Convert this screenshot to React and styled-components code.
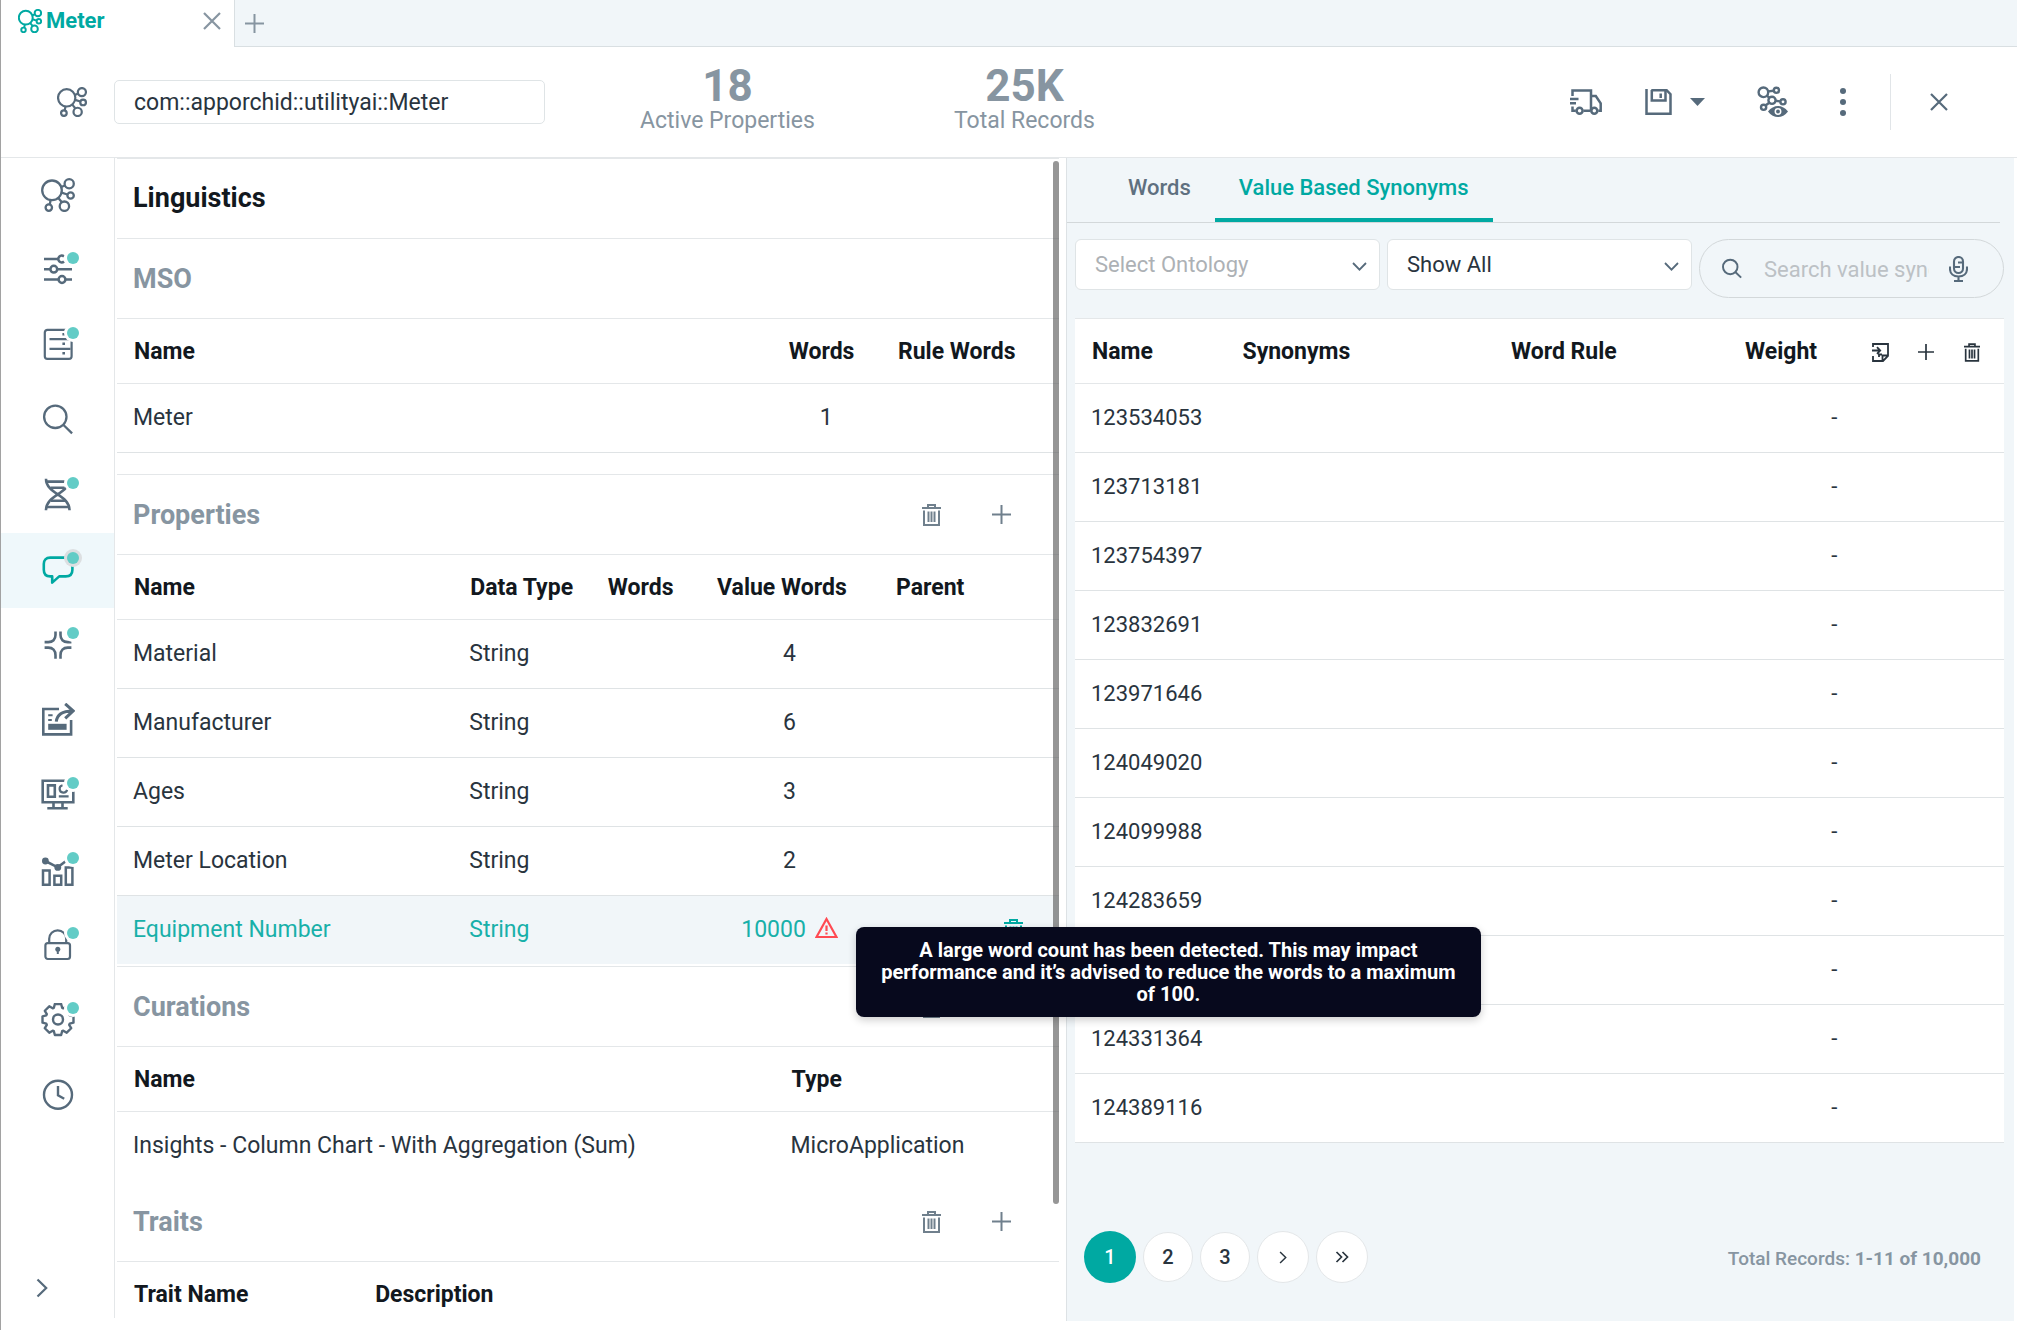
import React, { useState } from 'react'
import styled, { createGlobalStyle, css } from 'styled-components';


const GlobalStyle = createGlobalStyle`
  * {
    box-sizing: border-box;
  }

  body {
    margin: 0;
    background: #fff;
    color: #29343e;
    font-family: Roboto, "Liberation Sans", sans-serif;
    font-size: 22px;
    line-height: 26px;
  }

  button, input, select {
    font: inherit;
    color: inherit;
  }

  svg {
    display: block;
    flex: none;
  }
`;

const slate = '#566a7b';
const muted = '#8795a1';
const teal = '#00a9a2';
const line = '#e4e7e9';
const pale = '#f1f6f9';

const Shell = styled.div`
  display: flex;
  flex-direction: column;
  height: 100vh;
  padding-right: 3px;
  border-left: 1px solid #a2a2a2;
`;

/* tab strip */

const TabStrip = styled.div`
  display: flex;
  height: 47px;
  background: ${pale};
`;

const FileTab = styled.div`
  display: flex;
  align-items: center;
  width: 234px;
  padding: 0 13px 5px 17px;
  gap: 4px;
  background: #fff;
  border-right: 1px solid #d9dfe2;
  color: ${teal};
  font-weight: 700;
`;

const TabLabel = styled.span`
  flex: 1;
`;

const StripRest = styled.div`
  flex: 1;
  display: flex;
  align-items: center;
  padding-left: 10px;
  border-bottom: 1px solid #d9dfe2;
`;

const IconButton = styled.button`
  display: flex;
  align-items: center;
  justify-content: center;
  flex: none;
  min-width: ${({ $width }) => ($width ? `${$width}px` : '0')};
  margin: 0 0 0 ${({ $before }) => $before || 0}px;
  padding: 0;
  border: none;
  background: none;
  color: ${({ $color }) => $color || slate};
  cursor: pointer;
`;

/* header */

const Header = styled.header`
  display: flex;
  align-items: center;
  height: 111px;
  padding: 0 69px 0 56px;
  border-bottom: 1px solid ${line};
  color: ${slate};
  font-size: 23px;
`;

const NameInput = styled.input`
  width: 431px;
  height: 44px;
  margin: 0 95px 0 27px;
  padding: 0 19px;
  border: 1px solid #dfe4e6;
  border-radius: 5px;
  outline: none;
  color: #29343e;
`;

const Stat = styled.div`
  display: flex;
  flex-direction: column;
  align-items: center;
  margin-right: 139px;
  padding-bottom: 6px;
  color: ${muted};
`;

const StatValue = styled.strong`
  font-size: 44px;
  line-height: 44px;
  font-weight: 700;
`;

const Tools = styled.div`
  display: flex;
  align-items: center;
  margin-left: auto;
`;

const Divider = styled.span`
  width: 1px;
  height: 56px;
  margin-left: 44px;
  background: #e1e5e8;
`;

/* body */

const Body = styled.main`
  flex: 1;
  min-height: 0;
  display: grid;
  grid-template-columns: 114px minmax(0, 1fr) minmax(0, 1fr);
  grid-template-rows: minmax(0, 1fr);
`;

const Rail = styled.nav`
  display: flex;
  flex-direction: column;
  margin-bottom: 12px;
  border-right: 1px solid ${line};
`;

const RailItem = styled.button`
  position: relative;
  display: flex;
  align-items: center;
  justify-content: center;
  flex: none;
  height: 75px;
  padding: 0 0 2px;
  border: none;
  background: ${({ $active }) => ($active ? '#eff8fb' : 'none')};
  color: ${({ $active }) => ($active ? teal : slate)};
  cursor: pointer;
`;

const Dot = styled.span`
  position: absolute;
  top: 19px;
  left: 66px;
  width: 12px;
  height: 12px;
  border-radius: 50%;
  background: #62ccc6;
  box-shadow: 0 0 0 3px ${({ $active }) => ($active ? '#dcdfe1' : '#fff')};
`;

const RailToggle = styled(IconButton)`
  align-self: flex-start;
  margin: auto 0 20px 35px;
`;

const LeftPanel = styled.section`
  position: relative;
  margin: 0 7px 12px 2px;
  border-top: 1px solid ${line};
  overflow-x: visible;
  overflow-y: clip;
`;

const ScrollThumb = styled.div`
  position: absolute;
  top: 2px;
  right: 0;
  width: 6px;
  height: 1043px;
  border-radius: 3px;
  background: rgba(90, 90, 90, 0.64);
`;

const PanelTitle = styled.h1`
  height: 80px;
  margin: 0;
  padding: 0 16px;
  border-bottom: 1px solid ${line};
  color: #12181e;
  font-size: 27px;
  line-height: 79px;
  font-weight: 700;
`;

const Section = styled.section`
  margin-top: ${({ $gap }) => $gap || 0}px;
  border-top: ${({ $topLine }) => ($topLine ? `1px solid ${line}` : 'none')};
`;

const SectionHead = styled.div`
  display: flex;
  align-items: center;
  gap: 30px;
  height: 80px;
  padding: 0 38px 0 16px;
  border-bottom: 1px solid ${line};
`;

const SectionTitle = styled.h2`
  flex: 1;
  margin: 0;
  color: ${muted};
  font-size: 27px;
  font-weight: 700;
`;

const Table = styled.table`
  width: 100%;
  table-layout: fixed;
  border-spacing: 0;
  font-size: ${({ $size }) => $size || 23}px;
`;

const Th = styled.th`
  width: ${({ $width }) => $width || 'auto'};
  height: 65px;
  padding: 2px 0 0 ${({ $flush }) => ($flush ? 4 : 17)}px;
  border-bottom: 1px solid ${line};
  color: #12181e;
  font-size: 23px;
  font-weight: 700;
  text-align: left;
  white-space: nowrap;
`;

const Td = styled.td`
  height: ${({ $short }) => ($short ? 68 : 69)}px;
  padding: 0 16px;
  border-bottom: ${({ $noLine }) => ($noLine ? 'none' : '1px solid #dfe3e5')};
  text-align: ${({ $align }) => $align || 'left'};
  white-space: nowrap;

  ${({ $selected }) => $selected && css`
    background: ${pale};
    color: #18b0a9;
  `}
`;

const WarnCount = styled.span`
  display: inline-flex;
  align-items: flex-start;
  gap: 9px;
`;

const WarnAnchor = styled.span`
  position: relative;
  color: #ff4a52;
`;

const Tooltip = styled.span`
  position: absolute;
  z-index: 5;
  top: 10px;
  left: calc(100% + 18px);
  width: 625px;
  padding: 12px 24px;
  border-radius: 8px;
  background: #07091d;
  box-shadow: 0 3px 8px rgba(0, 0, 0, 0.2);
  color: #fff;
  font-size: 20px;
  line-height: 22px;
  font-weight: 700;
  text-align: center;
  white-space: normal;
`;

/* right panel */

const RightPanel = styled.section`
  display: flex;
  flex-direction: column;
  margin: 0 3px 9px 0;
  padding: 0 10px 0 8px;
  border-left: 1px solid #dde2e5;
  background: ${pale};
`;

const Tabs = styled.div`
  display: flex;
  flex: none;
  height: 65px;
  margin: 0 4px 0 -8px;
  padding-left: 37px;
  border-bottom: 1px solid #d3d8da;
`;

const Tab = styled.button`
  height: 64px;
  padding: 0 24px;
  border: none;
  border-bottom: 4px solid ${({ $active }) => ($active ? teal : 'transparent')};
  background: none;
  color: ${({ $active }) => ($active ? teal : '#5f7080')};
  font-weight: 500;
  cursor: pointer;
`;

const Filters = styled.div`
  display: grid;
  grid-template-columns: repeat(3, minmax(0, 1fr));
  align-items: start;
  gap: 7px;
  margin: 16px 0 20px;
`;

const SelectWrap = styled.div`
  position: relative;
`;

const SelectBox = styled.select`
  width: 100%;
  height: 51px;
  padding: 0 48px 0 19px;
  appearance: none;
  border: 1px solid #dfe4e6;
  border-radius: 6px;
  outline: none;
  background: #fff;
  color: ${({ $empty }) => ($empty ? '#adb1b5' : '#29343e')};
`;

const SelectArrow = styled.span`
  position: absolute;
  top: 23px;
  right: 13px;
  color: ${slate};
  pointer-events: none;
`;

const SearchBox = styled.div`
  display: flex;
  align-items: center;
  height: 59px;
  padding: 0 35px 0 21px;
  border: 1px solid #d3d8da;
  border-radius: 30px;
  color: ${slate};
`;

const SearchInput = styled.input`
  flex: 1;
  min-width: 0;
  margin: 0 20px 0 21px;
  padding: 2px 0 0;
  border: none;
  outline: none;
  background: none;

  &::placeholder {
    color: #bcc1c5;
  }
`;

const SynonymTable = styled(Table)`
  border-top: 1px solid ${line};
  background: #fff;
`;

const HeadActions = styled.div`
  display: flex;
`;

const Pager = styled.footer`
  display: flex;
  align-items: center;
  gap: 7px;
  margin-top: auto;
  padding: 0 23px 38px 9px;
`;

const PageButton = styled.button`
  display: flex;
  align-items: center;
  justify-content: center;
  width: ${({ $size }) => $size || 50}px;
  height: ${({ $size }) => $size || 50}px;
  padding: 0;
  border: ${({ $current }) => ($current ? 'none' : `1px solid ${line}`)};
  border-radius: 50%;
  background: ${({ $current }) => ($current ? teal : '#fff')};
  color: ${({ $current }) => ($current ? '#fff' : '#29343e')};
  font-size: 20px;
  font-weight: 500;
  cursor: pointer;
`;

const RecordCount = styled.span`
  margin-left: auto;
  padding-top: 4px;
  color: ${muted};
  font-size: 19px;
  font-weight: 500;

  strong {
    font-weight: 700;
  }
`;

/* icons */

const Svg = ({ w = 34, h = w, box = `0 0 ${w} ${h}`, sw = 2.2, children }) => (
  <svg width={w} height={h} viewBox={box} fill="none" stroke="currentColor" strokeWidth={sw} aria-hidden="true">
    {children}
  </svg>
)

const OrchidIcon = ({ size = 34, sw = 2.3 }) => (
  <Svg w={size} box="0 0 34 34" sw={sw}>
    <circle cx="11" cy="12.3" r="9.8" />
    <circle cx="28.2" cy="5.8" r="4.6" />
    <circle cx="29.6" cy="17.5" r="3.2" />
    <circle cx="23.4" cy="28.2" r="4.7" />
    <circle cx="7.8" cy="29.6" r="3.2" />
    <path d="M20.2 9l3.7-1.5M20.6 14.6l5.8 1.9M17.3 20l3.4 4M9.6 22l-.8 4.4" />
  </Svg>
)

const SlidersIcon = () => (
  <Svg sw={2.5}>
    <path d="M3 6h14M3 16.2h6.5M16.5 16.2H31M3 26.5h14.5M25 26.5h6" />
    <path d="M23 3.5a3.4 3.4 0 1 0 0 5" />
    <circle cx="12.8" cy="16.2" r="3.4" />
    <circle cx="21" cy="26.5" r="3.4" />
  </Svg>
)

const ServerIcon = () => (
  <Svg>
    <rect x="3.8" y="1.8" width="26.8" height="29" rx="2.6" />
    <path d="M8.5 11.2h21M8.5 20.8h21" />
    <path d="M21.4 6.3h2.6M21.4 15.8h2.6M21.4 25.2h2.6" strokeWidth="2.6" />
  </Svg>
)

const SearchIcon = ({ size = 34 }) => (
  <Svg w={size} box="0 0 34 34" sw={size < 30 ? 3 : 2.3}>
    <circle cx="14.3" cy="13.8" r="11.2" />
    <path d="M22.5 22l8.6 8.4" />
  </Svg>
)

const DnaIcon = () => (
  <Svg>
    <path d="M5 .7c0 15.5 23.5 16 23.5 31.6M28.5.7C28.5 16.2 5 16.7 5 32.3" strokeWidth="2.6" />
    <path d="M6 3.6h21M9.5 9.8h14M10 22.7h14M6 29h22" strokeWidth="2.6" />
  </Svg>
)

const ChatIcon = () => (
  <Svg sw={2.6}>
    <path d="M9.2 4.6h15.6c4.2 0 6.6 2.4 6.6 6.4v5.8c0 4.2-2.4 6.6-6.6 6.6h-6.6l-7 6.2v-6.2H9.2c-4.2 0-6.4-2.4-6.4-6.6V11c0-4 2.2-6.4 6.4-6.4z" strokeLinejoin="round" />
  </Svg>
)

const ConvergeIcon = () => (
  <Svg sw={2.6}>
    <path d="M14.5 3.5v3.6c0 4.4-2.8 7-7.2 7H3.6M19.5 3.5v3.6c0 4.4 2.8 7 7.2 7h3.7M14.5 30.8v-3.6c0-4.6-2.8-7.6-7.2-7.6H3.6M19.5 30.8v-3.6c0-4.6 2.8-7.6 7.2-7.6h3.7" />
  </Svg>
)

const ShareIcon = () => (
  <Svg sw={2.6}>
    <path d="M18 6H2.3v25.4h27.8V17" />
    <path d="M15.3 18.6c.6-7 6-10.7 16.5-10.7M24.2.8l8 7.1-8 7.5" strokeWidth="3" />
    <path d="M7.2 12.2h4.4M7.2 17h3.6" strokeWidth="2" />
    <rect x="7.2" y="20.8" width="18.4" height="6" fill="currentColor" stroke="none" />
  </Svg>
)

const MonitorIcon = () => (
  <Svg sw={2.6}>
    <path d="M1.7 2.8h30.6v21.5H1.7z" />
    <path d="M7 7.4h6.8v11.4H7z" />
    <path d="M21.5 7.2a3.8 3.8 0 1 0 4.6 4.6M17.8 18.4h9.8" strokeWidth="2.2" />
    <path d="M12.5 24.5v5M21.5 24.5v5M6.3 30.2h20.4" />
  </Svg>
)

const ChartIcon = () => (
  <Svg>
    <path d="M2 17.6h6.6v14.2H2zM13.4 22.8h6.8v9h-6.8zM24.8 14.4h6.6v17.4h-6.6z" strokeWidth="2.5" />
    <path d="M4.3 8l12.4 6.3L27 6.5" strokeWidth="2.6" />
    <circle cx="4.4" cy="8" r="3.4" fill="currentColor" stroke="none" />
    <circle cx="16.8" cy="14.4" r="3.4" fill="currentColor" stroke="none" />
  </Svg>
)

const LockIcon = () => (
  <Svg>
    <rect x="4.4" y="15.2" width="24.6" height="15.8" rx="2.4" />
    <path d="M8.2 15v-4.2a8.5 8.5 0 0 1 17 0V15" />
    <circle cx="16.8" cy="21.2" r="2.5" fill="currentColor" stroke="none" />
    <path d="M16.8 21v5" strokeWidth="2" />
  </Svg>
)

// eight rounded teeth around the centre of the icon
const gearPoints = () => {
  const points = []
  for (let i = 0; i < 8; i++) {
    [[-0.34, 12.4], [-0.2, 15.8], [0.2, 15.8], [0.34, 12.4]].forEach(([turn, radius]) => {
      const angle = (i * Math.PI) / 4 + turn
      points.push(`${(17 + radius * Math.sin(angle)).toFixed(2)},${(16.5 - radius * Math.cos(angle)).toFixed(2)}`)
    })
  }
  return points.join(' ')
}

const GearIcon = () => (
  <Svg sw={2.4}>
    <polygon points={gearPoints()} strokeLinejoin="round" />
    <circle cx="17" cy="16.5" r="5" />
  </Svg>
)

const ClockIcon = () => (
  <Svg sw={2.4}>
    <circle cx="17" cy="16.8" r="14" />
    <path d="M17 8v9.2l6.2 3.6" />
  </Svg>
)

const TruckIcon = () => (
  <Svg w={32} h={26} sw={2.5}>
    <path d="M2.5 7V1.5H21v20.2M21 7h4.8l4.9 7.4v7.3h-2.4M20.5 21.7h-7M5.8 21.7H2.5v-4.2" />
    <path d="M0 10h8.5M0 14.2h6" />
    <circle cx="9.6" cy="21.7" r="3" />
    <circle cx="24.3" cy="21.7" r="3" />
  </Svg>
)

const SaveIcon = () => (
  <Svg w={27} h={26} sw={2.5}>
    <path d="M1.5 0v24.7h24V5.2L21.6 1.2H6.3" />
    <path d="M6.8 1v10.4h13.7V1M15.7 4.5v4.6" />
  </Svg>
)

const CaretIcon = () => (
  <Svg w={15} h={8}>
    <path d="M0 0h15L7.5 8z" fill="currentColor" stroke="none" />
  </Svg>
)

const OrchidEyeIcon = () => (
  <Svg w={31} h={32} sw={2.4}>
    <circle cx="6.4" cy="6.3" r="4.8" />
    <circle cx="19.4" cy="4.3" r="2.6" />
    <circle cx="15" cy="14.3" r="3.6" />
    <circle cx="26" cy="15.8" r="2.6" />
    <circle cx="6.6" cy="21.3" r="2.6" />
    <path d="M11.3 5.4l5.4-.7M9.8 9.8l2.8 2M18.5 14.8l5 .6M12.2 16.7l-3.7 2.8" />
    <path d="M11 25.5c5.6-7.4 14.4-7.4 20 0-5.6 7.4-14.4 7.4-20 0z" fill="currentColor" stroke="none" />
    <circle cx="21" cy="25.5" r="2.7" stroke="#fff" strokeWidth="1.5" />
  </Svg>
)

const MoreIcon = () => (
  <Svg w={6} h={28}>
    <g fill="currentColor" stroke="none">
      <circle cx="3" cy="3" r="3" />
      <circle cx="3" cy="14" r="3" />
      <circle cx="3" cy="25" r="3" />
    </g>
  </Svg>
)

const CloseIcon = ({ sw = 2.2 }) => (
  <Svg w={18} sw={sw}>
    <path d="M1 1l16 16M17 1L1 17" />
  </Svg>
)

const PlusIcon = ({ size = 19 }) => (
  <Svg w={size} box="0 0 19 19" sw={2}>
    <path d="M9.5 0v19M0 9.5h19" />
  </Svg>
)

const TrashIcon = ({ w = 19, h = 22 }) => (
  <Svg w={w} h={h} box="0 0 19 22" sw={2}>
    <path d="M0 4h19M6 4V1h7v3M2 6.5V21h15V6.5M6.5 7.5V18M9.5 7.5V18M12.5 7.5V18" />
  </Svg>
)

const ImportIcon = () => (
  <Svg w={17} h={19} sw={1.8}>
    <path d="M1 4V1h15v12l-5 5H1v-5M0 7.5h8M5 4.2l3.2 3.3L5 10.8M10.5 18v-5.5H16M7 14v-2.5h3" />
  </Svg>
)

const WarnIcon = () => (
  <Svg w={23} h={21} sw={2.2}>
    <path d="M11.5 2L21.5 20h-20z" />
    <path d="M11.5 8.5v5.5M11.5 15.5v2" />
  </Svg>
)

const ChevronDown = () => (
  <Svg w={15} h={9} sw={1.8}>
    <path d="M1 1l6.5 6.7L14 1" />
  </Svg>
)

const ChevronRight = ({ w = 12, h = 20 }) => (
  <Svg w={w} h={h} box="0 0 12 20" sw={2.2}>
    <path d="M1.5 1.5l8.7 8.5-8.7 8.5" />
  </Svg>
)

const DoubleChevron = () => (
  <Svg w={15} h={12} sw={1.7}>
    <path d="M1.5 1l5 5-5 5M7.5 1l5 5-5 5" />
  </Svg>
)

const MicIcon = () => (
  <Svg w={19} h={26} sw={2.1}>
    <rect x="5" y="1" width="9" height="16" rx="4.5" />
    <path d="M1 10.5V13c0 4.7 3.5 7.5 8.5 7.5S18 17.7 18 13v-2.5M9.5 20.5V25M5 25h9M9 6.5h5M5 11h6" />
  </Svg>
)

/* data */

const railItems = [
  { label: 'Ontology', icon: <OrchidIcon /> },
  { label: 'Attributes', icon: <SlidersIcon />, dot: true },
  { label: 'Data sources', icon: <ServerIcon />, dot: true },
  { label: 'Search', icon: <SearchIcon /> },
  { label: 'Derivations', icon: <DnaIcon />, dot: true },
  { label: 'Linguistics', icon: <ChatIcon />, dot: true },
  { label: 'Actions', icon: <ConvergeIcon />, dot: true },
  { label: 'Share', icon: <ShareIcon /> },
  { label: 'Views', icon: <MonitorIcon />, dot: true },
  { label: 'Insights', icon: <ChartIcon />, dot: true },
  { label: 'Security', icon: <LockIcon />, dot: true },
  { label: 'Settings', icon: <GearIcon />, dot: true },
  { label: 'History', icon: <ClockIcon /> },
]

const properties = [
  { name: 'Material', type: 'String', words: 4 },
  { name: 'Manufacturer', type: 'String', words: 6 },
  { name: 'Ages', type: 'String', words: 3 },
  { name: 'Meter Location', type: 'String', words: 2 },
]

const synonyms = [
  '123534053', '123713181', '123754397', '123832691', '123971646', '124049020',
  '124099988', '124283659', '124297760', '124331364', '124389116',
]

const SectionActions = ({ name }) => (
  <>
    <IconButton $width={40} $color="#70808d" aria-label={`Delete ${name}`}><TrashIcon /></IconButton>
    <IconButton $width={40} $color="#70808d" aria-label={`Add ${name}`}><PlusIcon /></IconButton>
  </>
)

const Linguistics = () => (
  <LeftPanel>
    <PanelTitle>Linguistics</PanelTitle>

    <Section>
      <SectionHead>
        <SectionTitle>MSO</SectionTitle>
      </SectionHead>
      <Table>
        <thead>
          <tr>
            <Th $width="69.5%">Name</Th>
            <Th $width="11.6%">Words</Th>
            <Th>Rule Words</Th>
          </tr>
        </thead>
        <tbody>
          <tr>
            <Td>Meter</Td>
            <Td $align="center">1</Td>
            <Td />
          </tr>
        </tbody>
      </Table>
    </Section>

    <Section $gap={21} $topLine>
      <SectionHead>
        <SectionTitle>Properties</SectionTitle>
        <SectionActions name="property" />
      </SectionHead>
      <Table>
        <thead>
          <tr>
            <Th $width="35.7%">Name</Th>
            <Th $width="14.6%">Data Type</Th>
            <Th $width="11.6%">Words</Th>
            <Th $width="19%">Value Words</Th>
            <Th $width="9.4%">Parent</Th>
            <Th />
          </tr>
        </thead>
        <tbody>
          {properties.map(item => (
            <tr key={item.name}>
              <Td>{item.name}</Td>
              <Td>{item.type}</Td>
              <Td />
              <Td $align="center">{item.words}</Td>
              <Td />
              <Td />
            </tr>
          ))}
          <tr>
            <Td $selected $short $noLine>Equipment Number</Td>
            <Td $selected $short $noLine>String</Td>
            <Td $selected $short $noLine />
            <Td $selected $short $noLine $align="center">
              <WarnCount>
                10000
                <WarnAnchor>
                  <WarnIcon />
                  <Tooltip role="tooltip">
                    A large word count has been detected. This may impact performance and it’s advised to reduce the words to a maximum of 100.
                  </Tooltip>
                </WarnAnchor>
              </WarnCount>
            </Td>
            <Td $selected $short $noLine />
            <Td $selected $short $noLine>
              <IconButton $width={60} $color={teal} aria-label="Delete Equipment Number"><TrashIcon /></IconButton>
            </Td>
          </tr>
        </tbody>
      </Table>
    </Section>

    <Section $gap={2} $topLine>
      <SectionHead>
        <SectionTitle>Curations</SectionTitle>
        <SectionActions name="curation" />
      </SectionHead>
      <Table>
        <thead>
          <tr>
            <Th $width="69.8%">Name</Th>
            <Th>Type</Th>
          </tr>
        </thead>
        <tbody>
          <tr>
            <Td $short $noLine>Insights - Column Chart - With Aggregation (Sum)</Td>
            <Td $short $noLine>MicroApplication</Td>
          </tr>
        </tbody>
      </Table>
    </Section>

    <Section $gap={2}>
      <SectionHead>
        <SectionTitle>Traits</SectionTitle>
        <SectionActions name="trait" />
      </SectionHead>
      <Table>
        <thead>
          <tr>
            <Th $width="25.6%">Trait Name</Th>
            <Th>Description</Th>
          </tr>
        </thead>
      </Table>
    </Section>

    <ScrollThumb />
  </LeftPanel>
)

const Synonyms = () => {

  const [tab, setTab] = useState('values')
  const [page, setPage] = useState(1)

  return (
    <RightPanel>
      <Tabs role="tablist">
        <Tab role="tab" aria-selected={tab === 'words'} $active={tab === 'words'} onClick={() => setTab('words')}>Words</Tab>
        <Tab role="tab" aria-selected={tab === 'values'} $active={tab === 'values'} onClick={() => setTab('values')}>Value Based Synonyms</Tab>
      </Tabs>

      <Filters>
        <SelectWrap>
          <SelectBox aria-label="Ontology" $empty defaultValue="">
            <option value="">Select Ontology</option>
          </SelectBox>
          <SelectArrow><ChevronDown /></SelectArrow>
        </SelectWrap>
        <SelectWrap>
          <SelectBox aria-label="Show" defaultValue="all">
            <option value="all">Show All</option>
          </SelectBox>
          <SelectArrow><ChevronDown /></SelectArrow>
        </SelectWrap>
        <SearchBox>
          <SearchIcon size={22} />
          <SearchInput type="text" aria-label="Search value synonyms" placeholder="Search value synonyms" />
          <IconButton aria-label="Voice search"><MicIcon /></IconButton>
        </SearchBox>
      </Filters>

      <SynonymTable $size={22}>
        <thead>
          <tr>
            <Th $width="16.2%">Name</Th>
            <Th $width="28.9%">Synonyms</Th>
            <Th $width="25.2%">Word Rule</Th>
            <Th $width="13.5%">Weight</Th>
            <Th $flush>
              <HeadActions>
                <IconButton $width={46} $color="#29343e" aria-label="Import synonyms"><ImportIcon /></IconButton>
                <IconButton $width={46} $color="#29343e" aria-label="Add synonym"><PlusIcon size={16} /></IconButton>
                <IconButton $width={46} $color="#29343e" aria-label="Delete synonyms"><TrashIcon w={16} h={19} /></IconButton>
              </HeadActions>
            </Th>
          </tr>
        </thead>
        <tbody>
          {synonyms.map(name => (
            <tr key={name}>
              <Td>{name}</Td>
              <Td />
              <Td />
              <Td $align="right">-</Td>
              <Td />
            </tr>
          ))}
        </tbody>
      </SynonymTable>

      <Pager>
        {[1, 2, 3].map(n => (
          <PageButton key={n} $current={page === n} $size={page === n ? 52 : 50} onClick={() => setPage(n)}>{n}</PageButton>
        ))}
        <PageButton $size={52} aria-label="Next page"><ChevronRight w={8} h={13} /></PageButton>
        <PageButton $size={52} aria-label="Last page"><DoubleChevron /></PageButton>
        <RecordCount>Total Records: <strong>1-11 of 10,000</strong></RecordCount>
      </Pager>
    </RightPanel>
  )
}

const App = () => {

  const [active, setActive] = useState('Linguistics')

  return (
    <Shell>
      <GlobalStyle />

      <TabStrip>
        <FileTab>
          <OrchidIcon size={24} sw={2.8} />
          <TabLabel>Meter</TabLabel>
          <IconButton $color={muted} aria-label="Close tab"><CloseIcon /></IconButton>
        </FileTab>
        <StripRest>
          <IconButton $color={muted} aria-label="New tab"><PlusIcon /></IconButton>
        </StripRest>
      </TabStrip>

      <Header>
        <OrchidIcon size={30} sw={2.5} />
        <NameInput aria-label="Ontology name" defaultValue="com::apporchid::utilityai::Meter" />
        <Stat>
          <StatValue>18</StatValue>
          Active Properties
        </Stat>
        <Stat>
          <StatValue>25K</StatValue>
          Total Records
        </Stat>
        <Tools>
          <IconButton aria-label="Deploy"><TruckIcon /></IconButton>
          <IconButton $before={43} aria-label="Save"><SaveIcon /></IconButton>
          <IconButton $before={18} aria-label="Save options"><CaretIcon /></IconButton>
          <IconButton $before={52} aria-label="Preview"><OrchidEyeIcon /></IconButton>
          <IconButton $before={52} aria-label="More"><MoreIcon /></IconButton>
          <Divider />
          <IconButton $before={39} aria-label="Close"><CloseIcon /></IconButton>
        </Tools>
      </Header>

      <Body>
        <Rail>
          {railItems.map(item => (
            <RailItem
              key={item.label}
              $active={active === item.label}
              aria-label={item.label}
              onClick={() => setActive(item.label)}
            >
              {item.icon}
              {item.dot && <Dot $active={active === item.label} />}
            </RailItem>
          ))}
          <RailToggle aria-label="Expand menu"><ChevronRight /></RailToggle>
        </Rail>

        <Linguistics />
        <Synonyms />
      </Body>
    </Shell>
  )
}

export default App
